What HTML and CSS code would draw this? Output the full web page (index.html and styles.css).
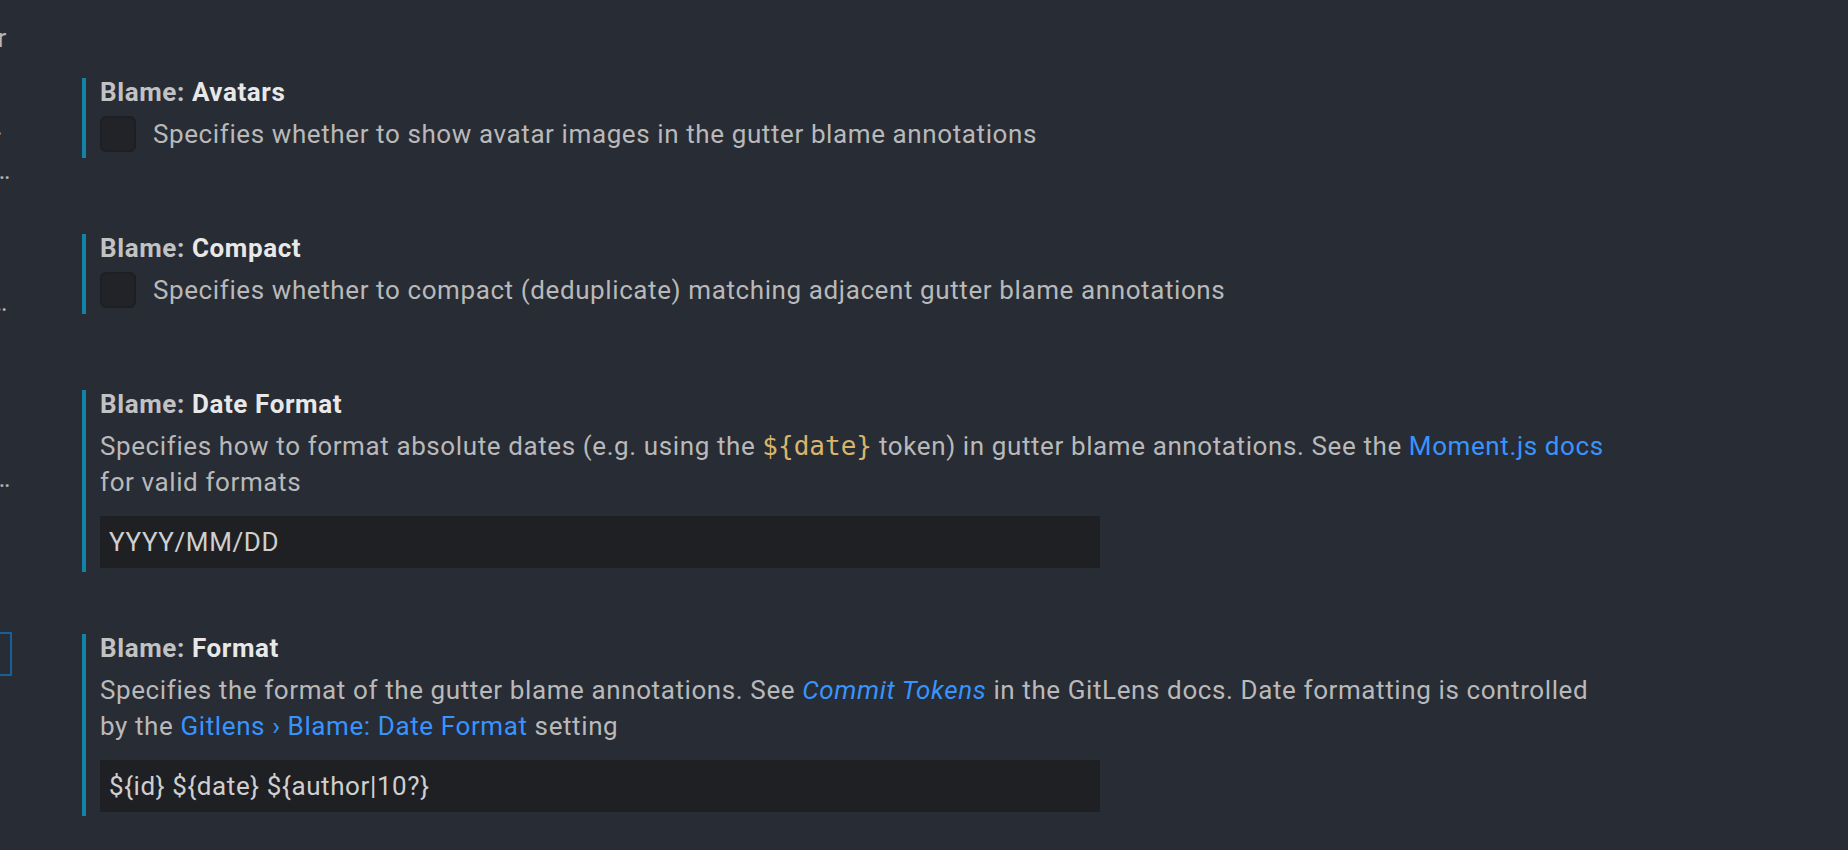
FILE: index.html
```html
<!DOCTYPE html>
<html lang="en">
<head>
<meta charset="utf-8">
<title>Settings - GitLens Blame</title>
<link rel="stylesheet" href="styles.css">
</head>
<body>
<div class="page">
  <nav class="toc">
    <div class="toc-item"><span>Status Bar</span></div>
    <div class="toc-item"><span></span></div>
    <div class="toc-item pad-a"><span>Current Line Blame…</span></div>
    <div class="toc-item pad-b"><span>Gutter Blame…</span></div>
    <div class="toc-item"><span></span></div>
    <div class="toc-item"><span></span></div>
    <div class="toc-item pad-c"><span>Gutter Changes…</span></div>
    <div class="toc-item"><span></span></div>
    <div class="toc-item"><span></span></div>
    <div class="toc-item"><span></span></div>
    <div class="toc-item pad-b"><span>Gutter Heatmap…</span></div>
    <div class="toc-item"><span></span></div>
    <div class="toc-item"><span></span></div>
    <div class="toc-item"><span></span></div>
    <div class="toc-item selected"><span></span></div>
  </nav>

  <main class="settings">
    <section class="setting bool">
      <div class="title"><span class="cat">Blame: </span><span class="label">Avatars</span></div>
      <div class="bool-row">
        <span class="checkbox"></span>
        <span class="desc">Specifies whether to show avatar images in the gutter blame annotations</span>
      </div>
    </section>

    <section class="setting bool">
      <div class="title"><span class="cat">Blame: </span><span class="label">Compact</span></div>
      <div class="bool-row">
        <span class="checkbox"></span>
        <span class="desc">Specifies whether to compact (deduplicate) matching adjacent gutter blame annotations</span>
      </div>
    </section>

    <section class="setting text">
      <div class="title"><span class="cat">Blame: </span><span class="label">Date Format</span></div>
      <p class="desc block">Specifies how to format absolute dates (e.g. using the <code class="tok">${date}</code> token) in gutter blame annotations. See the <a class="link">Moment.js docs</a> for valid formats</p>
      <div class="input">YYYY/MM/DD</div>
    </section>

    <section class="setting text">
      <div class="title"><span class="cat">Blame: </span><span class="label">Format</span></div>
      <p class="desc block">Specifies the format of the gutter blame annotations. See <a class="link italic">Commit Tokens</a> in the GitLens docs. Date formatting is controlled by the <a class="link">Gitlens › Blame: Date Format</a> setting</p>
      <div class="input">${id} ${date} ${author|10?}</div>
    </section>
  </main>
</div>
</body>
</html>
```

FILE: styles.css
```css
html, body {
  margin: 0;
  padding: 0;
  background: #282c35;
  height: 100%;
  overflow: hidden;
}

body {
  font-family: Roboto, "Liberation Sans", sans-serif;
  font-size: 26px;
  letter-spacing: 0.6px;
  color: #b9b9b9;
}

.page {
  display: flex;
  align-items: flex-start;
}

/* cut-off table of contents on the left */
.toc {
  width: 12px;
  flex: none;
  padding-top: 16px;
}

.toc-item {
  height: 44px;
  line-height: 44px;
  box-sizing: border-box;
  direction: rtl;
  overflow: hidden;
  white-space: nowrap;
  color: #b5b5b5;
  padding-right: 5px;
}

.toc-item span {
  direction: ltr;
  display: inline-block;
}

.toc-item.pad-a { padding-right: 9px; }
.toc-item.pad-b { padding-right: 1px; }
.toc-item.pad-c { padding-right: 4px; }

.toc-item.selected {
  border: 2px solid #17609a;
  border-left: none;
}

/* settings list */
.settings {
  margin-left: 70px;
  padding-top: 78px;
  flex: none;
}

.setting {
  border-left: 4px solid #1282a6;
  padding-left: 14px;
}

.setting.bool {
  padding-bottom: 6px;
  margin-bottom: 76px;
}

.setting.text {
  padding-bottom: 4px;
  margin-bottom: 62px;
}

.title {
  font-weight: 700;
  line-height: 28px;
  height: 28px;
  white-space: nowrap;
}

.title .cat {
  color: #c2c2c2;
}

.title .label {
  color: #e8e8e8;
}

.bool-row {
  display: flex;
  align-items: center;
  gap: 17px;
  margin-top: 10px;
  height: 36px;
}

.checkbox {
  width: 36px;
  height: 36px;
  box-sizing: border-box;
  border: 2px solid #1d1f23;
  border-radius: 6px;
  background: #212328;
  flex: none;
}

.desc {
  line-height: 36px;
  color: #b9b9b9;
  white-space: nowrap;
}

.desc.block {
  margin: 10px 0 0;
  width: 1510px;
  white-space: normal;
}

.tok {
  font-family: "DejaVu Sans Mono", "Liberation Mono", monospace;
  font-size: 26px;
  letter-spacing: 0;
  line-height: 1;
  color: #d9b56c;
}

.link {
  color: #3794ff;
  text-decoration: none;
}

.link.italic {
  font-style: italic;
}

.input {
  margin-top: 16px;
  width: 1000px;
  height: 52px;
  line-height: 52px;
  box-sizing: border-box;
  padding: 0 9px;
  background: #1f2024;
  color: #cfcfcf;
  white-space: nowrap;
  overflow: hidden;
}
```
